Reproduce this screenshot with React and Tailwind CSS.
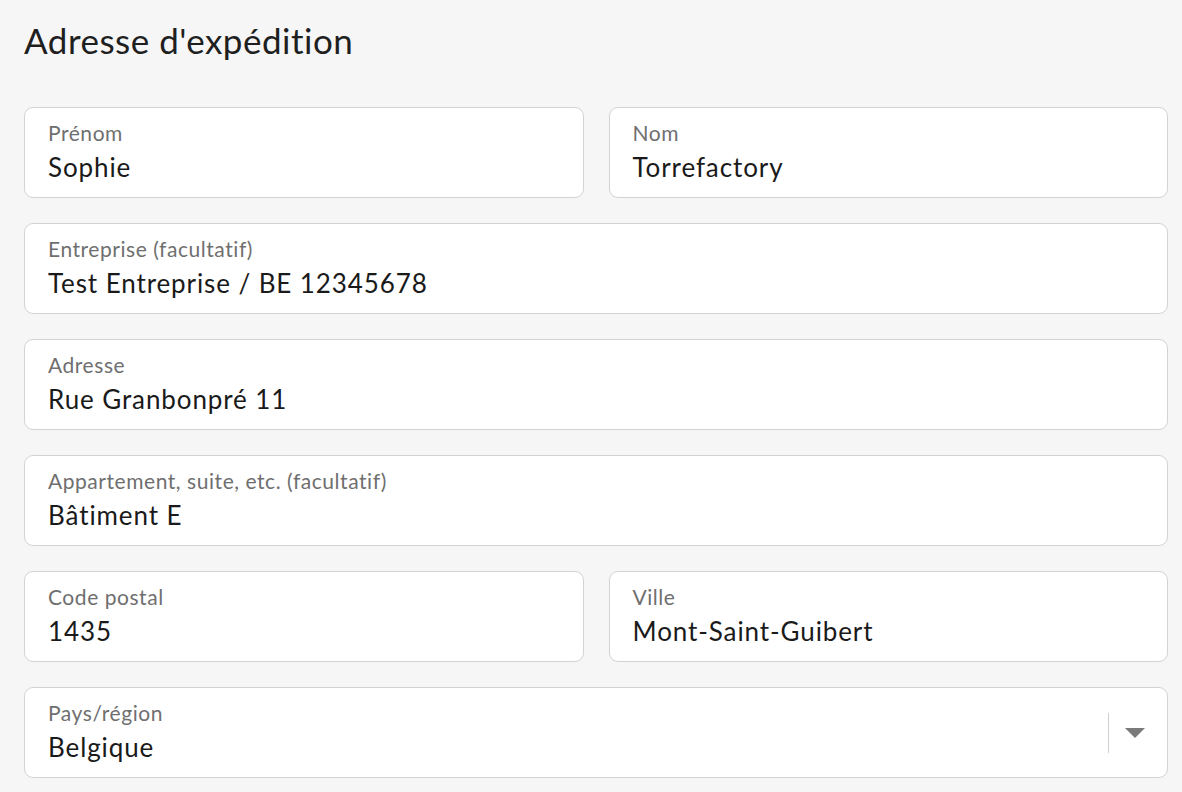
import React from 'react';

const Field = ({ label, value, className = '', children }) => (
    <div className={`relative h-[91px] rounded-[9px] border-[1.5px] border-[#d3d3d3] bg-white px-[23px] pt-[13px] ${className}`}>
        <div className="text-[21px] leading-[24px] tracking-[0.55px] text-[#6f6f6f]">{label}</div>
        <div className="mt-[7px] text-[26px] leading-[30px] tracking-[0.9px] text-[#1a1a1a]">{value}</div>
        {children}
    </div>
);

export default function App() {
    return (
        <div className="min-h-screen bg-[#f6f6f6] pl-6 pt-[16px]" style={{ fontFamily: 'Lato, "Open Sans", sans-serif' }}>
            <div className="w-[1144px]">
                <h2 className="text-[35px] leading-[48px] tracking-[0.5px] text-[#1f1f1f]">Adresse d'expédition</h2>

                <div className="mt-[43px] flex flex-col gap-[25px]">
                    <div className="grid grid-cols-2 gap-[25px]">
                        <Field label="Prénom" value="Sophie" />
                        <Field label="Nom" value="Torrefactory" />
                    </div>
                    <Field label="Entreprise (facultatif)" value="Test Entreprise / BE 12345678" />
                    <Field label="Adresse" value="Rue Granbonpré 11" />
                    <Field label="Appartement, suite, etc. (facultatif)" value="Bâtiment E" />
                    <div className="grid grid-cols-2 gap-[25px]">
                        <Field label="Code postal" value="1435" />
                        <Field label="Ville" value="Mont-Saint-Guibert" />
                    </div>
                    <Field label="Pays/région" value="Belgique">
                        <div className="absolute right-[22px] top-0 flex h-full items-center">
                            <div className="h-[40px] w-px bg-[#cfcfcf]" />
                            <svg className="ml-[16px]" width="20" height="10" viewBox="0 0 20 10">
                                <path d="M0 0 L20 0 L10 10 Z" fill="#7a7a7a" />
                            </svg>
                        </div>
                    </Field>
                </div>
            </div>
        </div>
    );
}
